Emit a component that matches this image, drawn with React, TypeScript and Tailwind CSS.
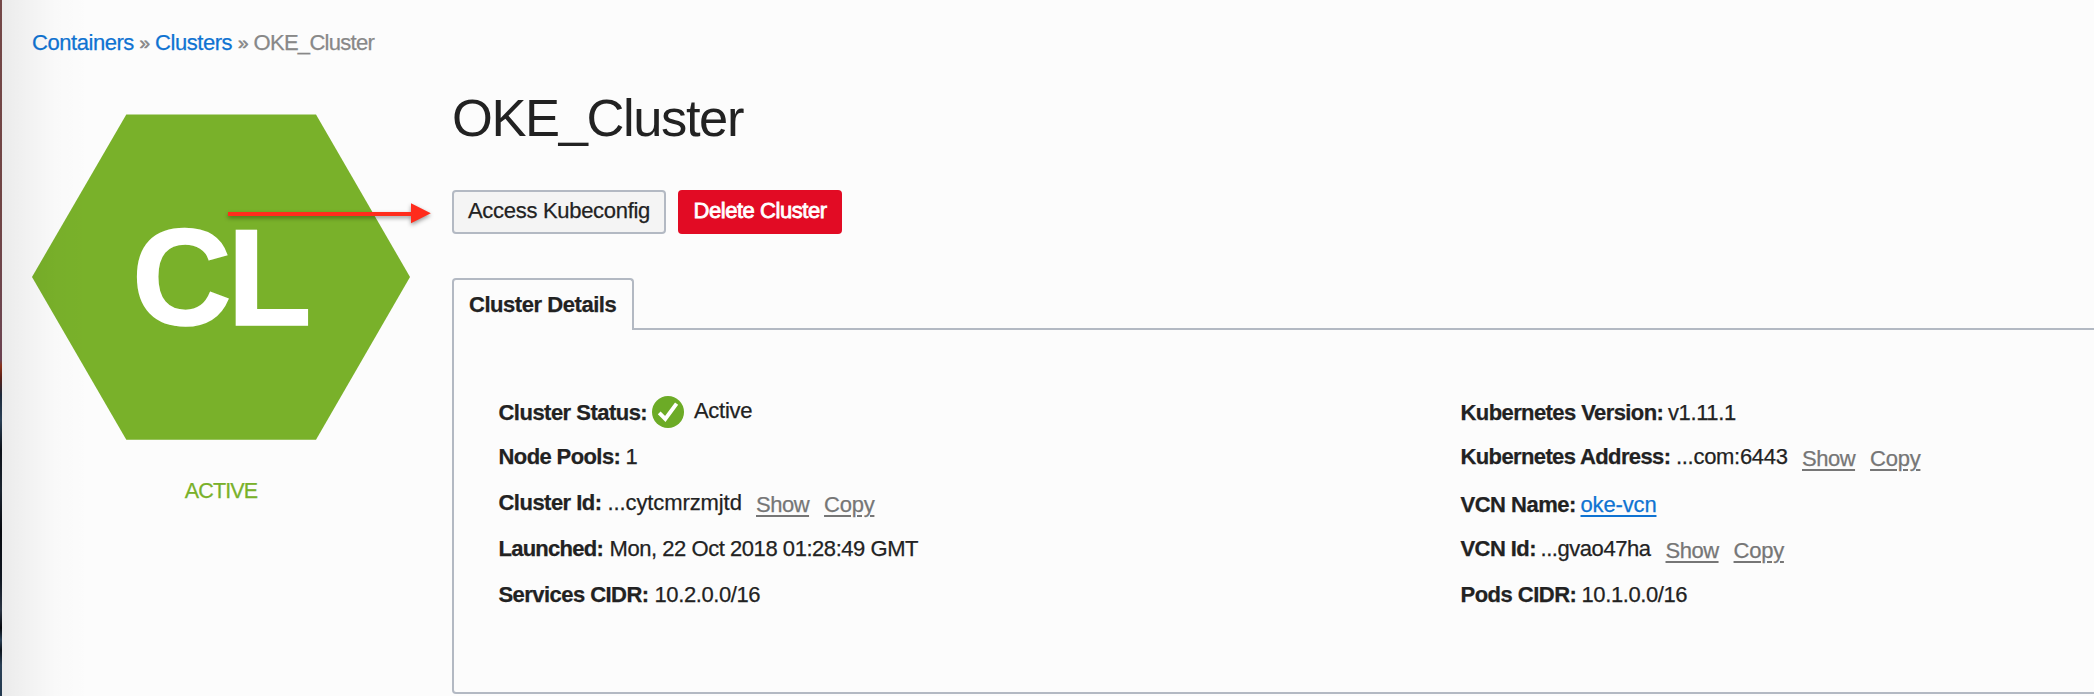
import type { ReactNode } from "react";

const label = "shrink-0 whitespace-nowrap font-bold";

function Row({ children, first = false }: { children: ReactNode; first?: boolean }) {
  return <div className={first ? "flex h-[44px] items-start" : "flex h-[46px] items-start"}>{children}</div>;
}

function Links() {
  return (
    <div className="flex gap-[15px] pt-[2px] text-[#767676]">
      <a className="-tracking-[0.5px] underline decoration-2 underline-offset-[3px]">Show</a>
      <a className="-tracking-[0.25px] underline decoration-2 underline-offset-[3px]">Copy</a>
    </div>
  );
}

function StatusIcon() {
  return (
    <svg viewBox="0 0 32 32" className="-mt-[4px] size-[32px] shrink-0">
      <circle cx="16" cy="16" r="16" fill="#6cab26" />
      <path d="M7.2 16.8 13.3 22.9 24.6 7.6" fill="none" stroke="#fff" strokeWidth="3.9" />
    </svg>
  );
}

export default function App() {
  return (
    <div className="relative flex h-[696px] w-[2094px] overflow-hidden bg-[#fcfcfc] font-['Liberation_Sans',Arial,sans-serif] text-[22px] leading-[25px] text-[#222] [-webkit-text-stroke-width:0.25px]">
      <div className="w-[2px] shrink-0 bg-[linear-gradient(to_bottom,#744848_0px,#704444_200px,#6d4550_330px,#6a4050_360px,#8a3018_366px,#5a2018_378px,#1c2a3c_395px,#2a4056_420px,#0c1018_450px,#1a2430_490px,#07090f_530px,#101722_580px,#2b3544_610px,#05070c_628px,#2a4056_640px,#0c131c_650px,#2a4056_665px,#243a50_696px)]" />

      <div className="flex w-full flex-col pl-[30px] pt-[30px]">
        <nav className="flex h-[25px] items-start text-[#888]">
          <a className="w-[107.5px] shrink-0 -tracking-[0.45px] text-[#0f73d2]">Containers</a>
          <span className="w-[15.5px] shrink-0 text-[19px] [-webkit-text-stroke-width:0.6px]">»</span>
          <a className="w-[83px] shrink-0 -tracking-[0.44px] text-[#0f73d2]">Clusters</a>
          <span className="w-[15.5px] shrink-0 text-[19px] [-webkit-text-stroke-width:0.6px]">»</span>
          <span className="-tracking-[0.7px]">OKE_Cluster</span>
        </nav>

        <div className="flex">
          <aside className="flex w-[420px] shrink-0 flex-col pt-[59px]">
            <div className="relative h-[326px] w-[378px]">
              <svg viewBox="0 0 378 326" className="block h-[326px] w-[378px]">
                <path d="M94.3 .4H284L378 163 284 325.7H94.3L0 163Z" fill="#79b12a" />
              </svg>
              <span className="absolute left-[100px] top-[86px] text-[138px] font-bold leading-[154px] -tracking-[4.5px] text-white [-webkit-text-stroke-width:1.5px]">CL</span>
            </div>
            <div className="mt-[39px] w-[378px] text-center text-[21.5px] -tracking-[0.9px] text-[#79b12a]">ACTIVE</div>
          </aside>

          <main className="flex w-[1700px] shrink-0 flex-col pt-[33px]">
            <h1 className="text-[52.5px] leading-[59px] -tracking-[1.4px] [-webkit-text-stroke-width:0px]">OKE_Cluster</h1>
            <div className="mt-[43px] flex gap-[12px]">
              <button className="flex h-[44px] w-[214px] items-start whitespace-nowrap rounded-[4px] border-2 border-[#b3b9c3] bg-[#f4f4f4] pl-[14px] pt-[6px] -tracking-[0.3px]">Access Kubeconfig</button>
              <button className="flex h-[44px] w-[164px] items-start whitespace-nowrap rounded-[4px] bg-[#e20b24] pl-[15.5px] pt-[8px] -tracking-[0.45px] text-white [-webkit-text-stroke-width:0.8px]">Delete Cluster</button>
            </div>

            <div className="mt-[44px] flex h-[52px]">
              <div className="h-[52px] w-[182px] shrink-0 rounded-t-[4px] border-2 border-b-0 border-[#b3b9c3] pl-[15px] pt-[12px] font-bold -tracking-[0.45px]">Cluster Details</div>
              <div className="h-[52px] grow border-b-2 border-[#b3b9c3]" />
            </div>
            <section className="flex h-[364px] rounded-b-[4px] border-2 border-t-0 border-[#b3b9c3] pl-[44.5px] pt-[70px]">
              <div className="flex w-[962px] shrink-0 flex-col">
                <Row first>
                  <span className={`${label} w-[153.5px] -tracking-[0.52px]`}>Cluster Status:</span>
                  <StatusIcon />
                  <span className="-mt-[2px] ml-[10px] -tracking-[0.3px]">Active</span>
                </Row>
                <Row>
                  <span className={`${label} w-[127px] -tracking-[0.6px]`}>Node Pools:</span>
                  <span>1</span>
                </Row>
                <Row>
                  <span className={`${label} w-[109px] -tracking-[0.52px]`}>Cluster Id:</span>
                  <span className="w-[148.5px] shrink-0 -tracking-[0.1px]">...cytcmrzmjtd</span>
                  <Links />
                </Row>
                <Row>
                  <span className={`${label} w-[111px] -tracking-[0.75px]`}>Launched:</span>
                  <span className="-tracking-[0.45px]">Mon, 22 Oct 2018 01:28:49 GMT</span>
                </Row>
                <Row>
                  <span className={`${label} w-[156px] -tracking-[0.55px]`}>Services CIDR:</span>
                  <span className="-tracking-[0.4px]">10.2.0.0/16</span>
                </Row>
              </div>

              <div className="flex flex-col">
                <Row first>
                  <span className={`${label} w-[207.5px] -tracking-[0.59px]`}>Kubernetes Version:</span>
                  <span className="-tracking-[0.4px]">v1.11.1</span>
                </Row>
                <Row>
                  <span className={`${label} w-[215.5px] -tracking-[0.62px]`}>Kubernetes Address:</span>
                  <span className="w-[126px] shrink-0 -tracking-[0.3px]">...com:6443</span>
                  <Links />
                </Row>
                <Row>
                  <span className={`${label} w-[120px] pt-[2px] -tracking-[0.5px]`}>VCN Name:</span>
                  <a className="pt-[2px] -tracking-[0.15px] text-[#0f73d2] underline decoration-2 underline-offset-[3px]">oke-vcn</a>
                </Row>
                <Row>
                  <span className={`${label} w-[80px] -tracking-[0.56px]`}>VCN Id:</span>
                  <span className="w-[125px] shrink-0 -tracking-[0.45px]">...gvao47ha</span>
                  <Links />
                </Row>
                <Row>
                  <span className={`${label} w-[121px] -tracking-[0.52px]`}>Pods CIDR:</span>
                  <span className="-tracking-[0.4px]">10.1.0.0/16</span>
                </Row>
              </div>
            </section>
          </main>
        </div>
      </div>

      <div className="pointer-events-none absolute left-[2px] top-0 h-[696px] w-[90px] bg-[linear-gradient(to_right,rgba(0,0,0,0.07)_0px,rgba(0,0,0,0.055)_12px,rgba(0,0,0,0.03)_34px,rgba(0,0,0,0.012)_54px,rgba(0,0,0,0)_88px)]" />

      <svg viewBox="0 0 210 32" className="absolute left-[224px] top-[200px] h-[32px] w-[210px] drop-shadow-[0_2px_2px_rgba(0,0,0,0.4)]">
        <path d="M4 12H187V3.3L206.8 13.3 187 23.3V16H4Z" fill="#ff2c1c" />
      </svg>
    </div>
  );
}
